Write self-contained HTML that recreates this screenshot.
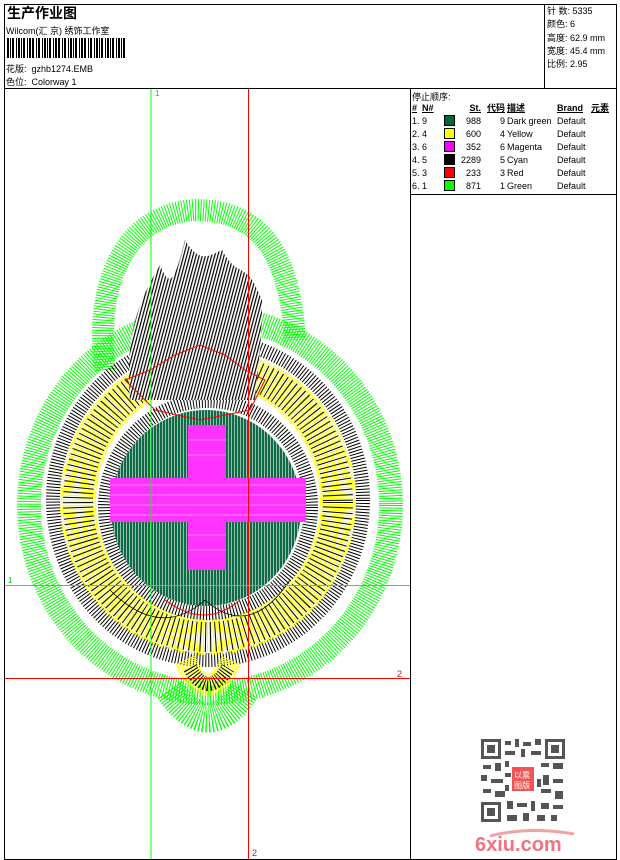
<!DOCTYPE html>
<html><head><meta charset="utf-8"><style>
*{margin:0;padding:0}
body{width:620px;height:860px;background:#fff;position:relative;overflow:hidden;font-family:"Liberation Sans","Noto Sans CJK SC",sans-serif;font-size:9px;color:#000}
.a{position:absolute;white-space:nowrap}
table{border-collapse:collapse}
td{font-size:9px;height:13px;padding:0;white-space:nowrap}
.sw{display:inline-block;width:9px;height:9px;border:1px solid #000;vertical-align:middle}
</style></head><body>
<div class="a" style="left:4px;top:4px;width:611px;height:854px;border:1px solid #000"></div>
<div class="a" style="left:4px;top:88px;width:612px;border-top:1px solid #000"></div>
<div class="a" style="left:544px;top:4px;height:84px;border-left:1px solid #000"></div>
<div class="a" style="left:410px;top:88px;height:771px;border-left:1px solid #000"></div>
<div class="a" style="left:410px;top:194px;width:206px;border-top:1px solid #000"></div>
<div class="a" style="left:7px;top:3px;font-size:14px;font-weight:bold">生产作业图</div>
<div class="a" style="left:6px;top:24px">Wilcom(汇 京) 绣饰工作室</div>
<svg class="a" style="left:7px;top:38px" width="120" height="20">
<g fill="#000">
<rect x="0" y="0" width="2" height="20"/><rect x="3" y="0" width="1" height="20"/><rect x="5" y="0" width="2" height="20"/><rect x="9" y="0" width="1" height="20"/><rect x="11" y="0" width="2" height="20"/><rect x="14" y="0" width="1" height="20"/><rect x="16" y="0" width="2" height="20"/><rect x="20" y="0" width="1" height="20"/><rect x="22" y="0" width="2" height="20"/><rect x="25" y="0" width="2" height="20"/><rect x="29" y="0" width="1" height="20"/><rect x="31" y="0" width="2" height="20"/><rect x="35" y="0" width="1" height="20"/><rect x="37" y="0" width="2" height="20"/><rect x="40" y="0" width="1" height="20"/><rect x="42" y="0" width="2" height="20"/><rect x="46" y="0" width="1" height="20"/><rect x="48" y="0" width="2" height="20"/><rect x="51" y="0" width="2" height="20"/><rect x="55" y="0" width="1" height="20"/><rect x="57" y="0" width="2" height="20"/><rect x="61" y="0" width="1" height="20"/><rect x="63" y="0" width="2" height="20"/><rect x="66" y="0" width="1" height="20"/><rect x="68" y="0" width="2" height="20"/><rect x="72" y="0" width="1" height="20"/><rect x="74" y="0" width="2" height="20"/><rect x="77" y="0" width="2" height="20"/><rect x="81" y="0" width="1" height="20"/><rect x="83" y="0" width="2" height="20"/><rect x="87" y="0" width="1" height="20"/><rect x="89" y="0" width="2" height="20"/><rect x="92" y="0" width="1" height="20"/><rect x="94" y="0" width="2" height="20"/><rect x="98" y="0" width="1" height="20"/><rect x="100" y="0" width="2" height="20"/><rect x="103" y="0" width="1" height="20"/><rect x="105" y="0" width="2" height="20"/><rect x="109" y="0" width="1" height="20"/><rect x="111" y="0" width="2" height="20"/><rect x="114" y="0" width="1" height="20"/><rect x="116" y="0" width="2" height="20"/>
</g></svg>
<div class="a" style="left:6px;top:62px">花版: &nbsp;gzhb1274.EMB</div>
<div class="a" style="left:6px;top:75px">色位: &nbsp;Colorway 1</div>
<div class="a" style="left:547px;top:5px;line-height:13.3px">针 数: 5335<br>颜色: 6<br>高度: 62.9 mm<br>宽度: 45.4 mm<br>比例: 2.95</div>
<div class="a" style="left:412px;top:90px">停止顺序:</div>
<table class="a" style="left:412px;top:101px">
<tr style="font-weight:bold;text-decoration:underline"><td style="width:10px">#</td><td style="width:22px">N#</td><td style="width:13px"></td><td style="width:24px;text-align:right">St.</td><td style="width:24px;text-align:right">代码</td><td style="width:50px;padding-left:2px">描述</td><td style="width:32px">Brand</td><td style="padding-left:2px">元素</td></tr>
<tr><td>1.</td><td>9</td><td><span class="sw" style="background:#006633"></span></td><td align="right">988</td><td align="right">9</td><td style="padding-left:2px">Dark green</td><td>Default</td><td></td></tr>
<tr><td>2.</td><td>4</td><td><span class="sw" style="background:#ffff00"></span></td><td align="right">600</td><td align="right">4</td><td style="padding-left:2px">Yellow</td><td>Default</td><td></td></tr>
<tr><td>3.</td><td>6</td><td><span class="sw" style="background:#ff00ff"></span></td><td align="right">352</td><td align="right">6</td><td style="padding-left:2px">Magenta</td><td>Default</td><td></td></tr>
<tr><td>4.</td><td>5</td><td><span class="sw" style="background:#000"></span></td><td align="right">2289</td><td align="right">5</td><td style="padding-left:2px">Cyan</td><td>Default</td><td></td></tr>
<tr><td>5.</td><td>3</td><td><span class="sw" style="background:#ff0000"></span></td><td align="right">233</td><td align="right">3</td><td style="padding-left:2px">Red</td><td>Default</td><td></td></tr>
<tr><td>6.</td><td>1</td><td><span class="sw" style="background:#00ff00"></span></td><td align="right">871</td><td align="right">1</td><td style="padding-left:2px">Green</td><td>Default</td><td></td></tr>
</table>
<svg class="a" style="left:5px;top:89px" width="405" height="770" viewBox="5 89 405 770">
<defs>
<pattern id="fl" width="3" height="3" patternUnits="userSpaceOnUse" patternTransform="rotate(15)">
<rect width="3" height="3" fill="#fff"/><rect width="1.2" height="3" fill="#000"/></pattern>
<pattern id="gr" width="3" height="3" patternUnits="userSpaceOnUse">
<rect width="3" height="3" fill="#0f6b45"/><rect width="0.8" height="3" fill="#fff" opacity="0.7"/></pattern>
</defs>
<g fill="none">
<ellipse cx="210" cy="505" rx="181" ry="188" stroke="#00ff00" stroke-width="24" stroke-dasharray="1 1.6"/>
<path d="M105 370 C95 290 120 215 195 210 C265 210 290 260 295 340" stroke="#00ff00" stroke-width="22" stroke-dasharray="1 1.6"/>
<path d="M170 690 Q208 745 245 690" stroke="#00ff00" stroke-width="30" stroke-dasharray="1 1.6"/>
<ellipse cx="208" cy="500" rx="155" ry="160" stroke="#000" stroke-width="14" stroke-dasharray="1 2"/>
<ellipse cx="208" cy="502" rx="130" ry="135" stroke="#ffff00" stroke-width="36" stroke-dasharray="1 1"/>
<ellipse cx="208" cy="502" rx="130" ry="135" stroke="#000" stroke-width="30" stroke-dasharray="1 4"/>
<path d="M185 660 Q208 710 232 660" stroke="#ffff00" stroke-width="22" stroke-dasharray="1 1"/>
<path d="M190 668 Q208 700 228 668" stroke="#000" stroke-width="14" stroke-dasharray="1 2"/>
<ellipse cx="208" cy="507" rx="103" ry="106" stroke="#000" stroke-width="14" stroke-dasharray="1 2"/>
</g>
<ellipse cx="206" cy="508" rx="95" ry="98" fill="url(#gr)"/>
<rect x="188" y="425" width="38" height="145" fill="#ff33ff"/>
<rect x="110" y="478" width="196" height="44" fill="#ff33ff"/>
<g stroke="#ff99ff" stroke-width="0.8"><path d="M110 485H306M110 495H306M110 505H306M110 515H306M188 440H226M188 455H226M188 535H226M188 550H226"/></g>
<path d="M130 400 C125 330 140 300 160 265 C170 290 175 280 185 240 C200 265 210 255 222 250 C235 275 245 265 255 285 L262 300 C262 340 258 370 255 400 Z" fill="url(#fl)"/>
<path d="M125 380 L150 370 L175 355 L200 345 L225 355 L245 370 L265 380 L250 410 L200 420 L155 410 Z" fill="none" stroke="#ff0000" stroke-width="1"/>
<path d="M165 600 Q205 630 240 600" fill="none" stroke="#ff0000" stroke-width="1"/>
<g stroke="#000" stroke-width="0.8" fill="none"><path d="M110 590 Q160 640 205 600 Q250 640 290 580"/></g>
<line x1="151" y1="89" x2="151" y2="860" stroke="#00ff00" stroke-width="1"/>
<line x1="248.5" y1="89" x2="248.5" y2="860" stroke="#ff0000" stroke-width="1"/>
<line x1="5" y1="585.5" x2="410" y2="585.5" stroke="#00ff00" stroke-width="1"/>
<line x1="5" y1="678.5" x2="410" y2="678.5" stroke="#ff0000" stroke-width="1"/>
<text x="155" y="96" font-size="8" fill="#00cc00" font-family="Liberation Sans">1</text>
<text x="8" y="583" font-size="8" fill="#00cc00" font-family="Liberation Sans">1</text>
<text x="397" y="677" font-size="9" fill="#ff0000" font-family="Liberation Sans">2</text>
<text x="252" y="856" font-size="9" fill="#ff0000" font-family="Liberation Sans">2</text>
</svg>
<svg class="a" style="left:481px;top:739px" width="84" height="83">
<rect width="84" height="83" fill="#fff"/>
<g fill="#555">
<rect x="0" y="0" width="20" height="20"/><rect x="64" y="0" width="20" height="20"/><rect x="0" y="63" width="20" height="20"/>
</g>
<g fill="#fff"><rect x="3" y="3" width="14" height="14"/><rect x="67" y="3" width="14" height="14"/><rect x="3" y="66" width="14" height="14"/></g>
<g fill="#555"><rect x="6" y="6" width="8" height="8"/><rect x="70" y="6" width="8" height="8"/><rect x="6" y="69" width="8" height="8"/>
<path d="M24 2h6v4h-6zM34 0h4v8h-4zM42 3h8v4h-8zM54 0h6v6h-6zM24 12h10v4h-10zM40 10h4v8h-4zM50 12h10v4h-10zM2 26h8v4h-8zM14 24h6v8h-6zM24 22h4v6h-4zM60 24h8v4h-8zM72 24h10v6h-10zM0 36h6v6h-6zM10 40h12v4h-12zM62 36h6v10h-6zM72 40h10v4h-10zM2 50h8v4h-8zM14 52h10v6h-10zM60 50h10v4h-10zM74 52h8v8h-8zM26 62h6v8h-6zM36 64h10v4h-10zM50 62h4v10h-4zM60 64h8v6h-8zM72 66h10v4h-10zM26 76h10v6h-10zM42 74h6v8h-6zM56 76h8v6h-8zM70 76h6v6h-6zM24 34h6v4h-6zM24 46h4v6h-4zM56 40h4v8h-4z"/></g>
<rect x="31" y="28" width="22" height="24" fill="#f05555"/>
<text x="33" y="39" font-size="8" fill="#fff" font-family="Noto Sans CJK SC">以票</text>
<text x="33" y="49" font-size="8" fill="#fff" font-family="Noto Sans CJK SC">图版</text>
</svg>
<svg class="a" style="left:470px;top:826px" width="110" height="30">
<path d="M20 10 Q60 0 104 8" stroke="#f4a0a8" stroke-width="3" fill="none"/>
<text x="5" y="25" font-size="20" font-weight="bold" fill="#f07480" font-family="Liberation Sans">6xiu.com</text>
</svg>
</body></html>
